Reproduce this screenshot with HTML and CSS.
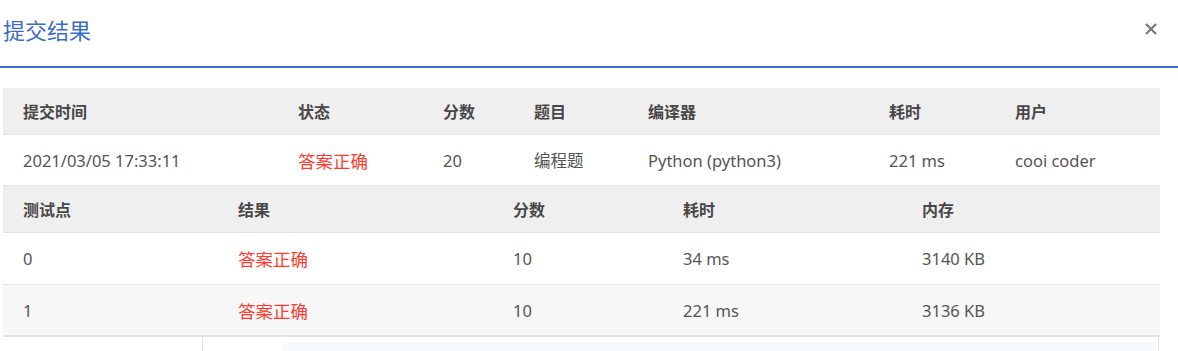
FILE: index.html
```html
<!DOCTYPE html>
<html lang="zh-CN">
<head>
    <meta charset="UTF-8">
    <title>提交结果</title>
    <link rel="stylesheet" href="styles.css">
</head>
<body>
    <div class="modal">
        <div class="modal-header">
            <h2 class="modal-title">提交结果</h2>
            <span class="close">
                <svg width="14" height="14" viewBox="0 0 14 14"><path d="M2 2 L12 12 M12 2 L2 12" stroke="#777" stroke-width="2.2" fill="none"/></svg>
            </span>
        </div>
        <div class="modal-body">
            <table class="result-table">
                <colgroup>
                    <col style="width:275px"><col style="width:145px"><col style="width:91px"><col style="width:114px"><col style="width:241px"><col style="width:126px"><col>
                </colgroup>
                <thead>
                    <tr>
                        <th>提交时间</th>
                        <th>状态</th>
                        <th>分数</th>
                        <th>题目</th>
                        <th>编译器</th>
                        <th>耗时</th>
                        <th>用户</th>
                    </tr>
                </thead>
                <tbody>
                    <tr>
                        <td>2021/03/05 17:33:11</td>
                        <td class="status-ok">答案正确</td>
                        <td>20</td>
                        <td>编程题</td>
                        <td>Python (python3)</td>
                        <td>221 ms</td>
                        <td>cooi coder</td>
                    </tr>
                </tbody>
            </table>
            <table class="result-table case-table">
                <colgroup>
                    <col style="width:215px"><col style="width:275px"><col style="width:170px"><col style="width:239px"><col>
                </colgroup>
                <thead>
                    <tr>
                        <th>测试点</th>
                        <th>结果</th>
                        <th>分数</th>
                        <th>耗时</th>
                        <th>内存</th>
                    </tr>
                </thead>
                <tbody>
                    <tr>
                        <td>0</td>
                        <td class="status-ok">答案正确</td>
                        <td>10</td>
                        <td>34 ms</td>
                        <td>3140 KB</td>
                    </tr>
                    <tr class="alt">
                        <td>1</td>
                        <td class="status-ok">答案正确</td>
                        <td>10</td>
                        <td>221 ms</td>
                        <td>3136 KB</td>
                    </tr>
                </tbody>
            </table>
            <div class="code-box">
                <div class="code-panel"></div>
            </div>
        </div>
    </div>
</body>
</html>
```

FILE: styles.css
```css
body {
    margin: 0;
    background-color: #fff;
    font-family: "Noto Sans", "Noto Sans CJK SC", sans-serif;
    overflow: hidden;
}

.modal {
    width: 1178px;
    height: 351px;
    overflow: hidden;
}

.modal-header {
    display: flex;
    align-items: center;
    justify-content: space-between;
    height: 58px;
    padding: 0 20px 8px 3px;
    border-bottom: 2px solid #3d6cc7;
}

.modal-title {
    margin: 0;
    font-family: "Noto Sans CJK SC", sans-serif;
    font-size: 22px;
    font-weight: normal;
    color: #3d6cc7;
}

.close {
    display: flex;
    cursor: pointer;
}

.modal-body {
    padding: 20px 18px 0 3px;
}

/* result tables */
.result-table {
    width: 1157px;
    border-collapse: collapse;
    table-layout: fixed;
}

.result-table th,
.result-table td {
    padding: 0 20px;
    text-align: left;
    border-bottom: 1px solid #e3e3e3;
    white-space: nowrap;
}

.result-table th {
    height: 46px;
    background-color: #efefef;
    font-family: "Noto Sans CJK SC", sans-serif;
    font-size: 16px;
    font-weight: bold;
    color: #484848;
}

.result-table td {
    height: 50px;
    font-size: 16.5px;
    color: #555;
}

.case-table td {
    height: 51px;
}

.result-table .alt td {
    height: 50px;
    background-color: #f7f7f7;
    border-bottom: 2px solid #e3e3e3;
}

.status-ok {
    font-family: "Noto Sans CJK SC", sans-serif;
    color: #ff3b30 !important;
    font-size: 17.5px !important;
}

/* code area below */
.code-box {
    box-sizing: border-box;
    margin-left: 199px;
    width: 957px;
    height: 40px;
    border-left: 1px solid #e3e3e3;
    border-right: 1px solid #e3e3e3;
    padding: 6px 0 0 79px;
}

.code-panel {
    height: 40px;
    background-color: #f8fafc;
}
```
